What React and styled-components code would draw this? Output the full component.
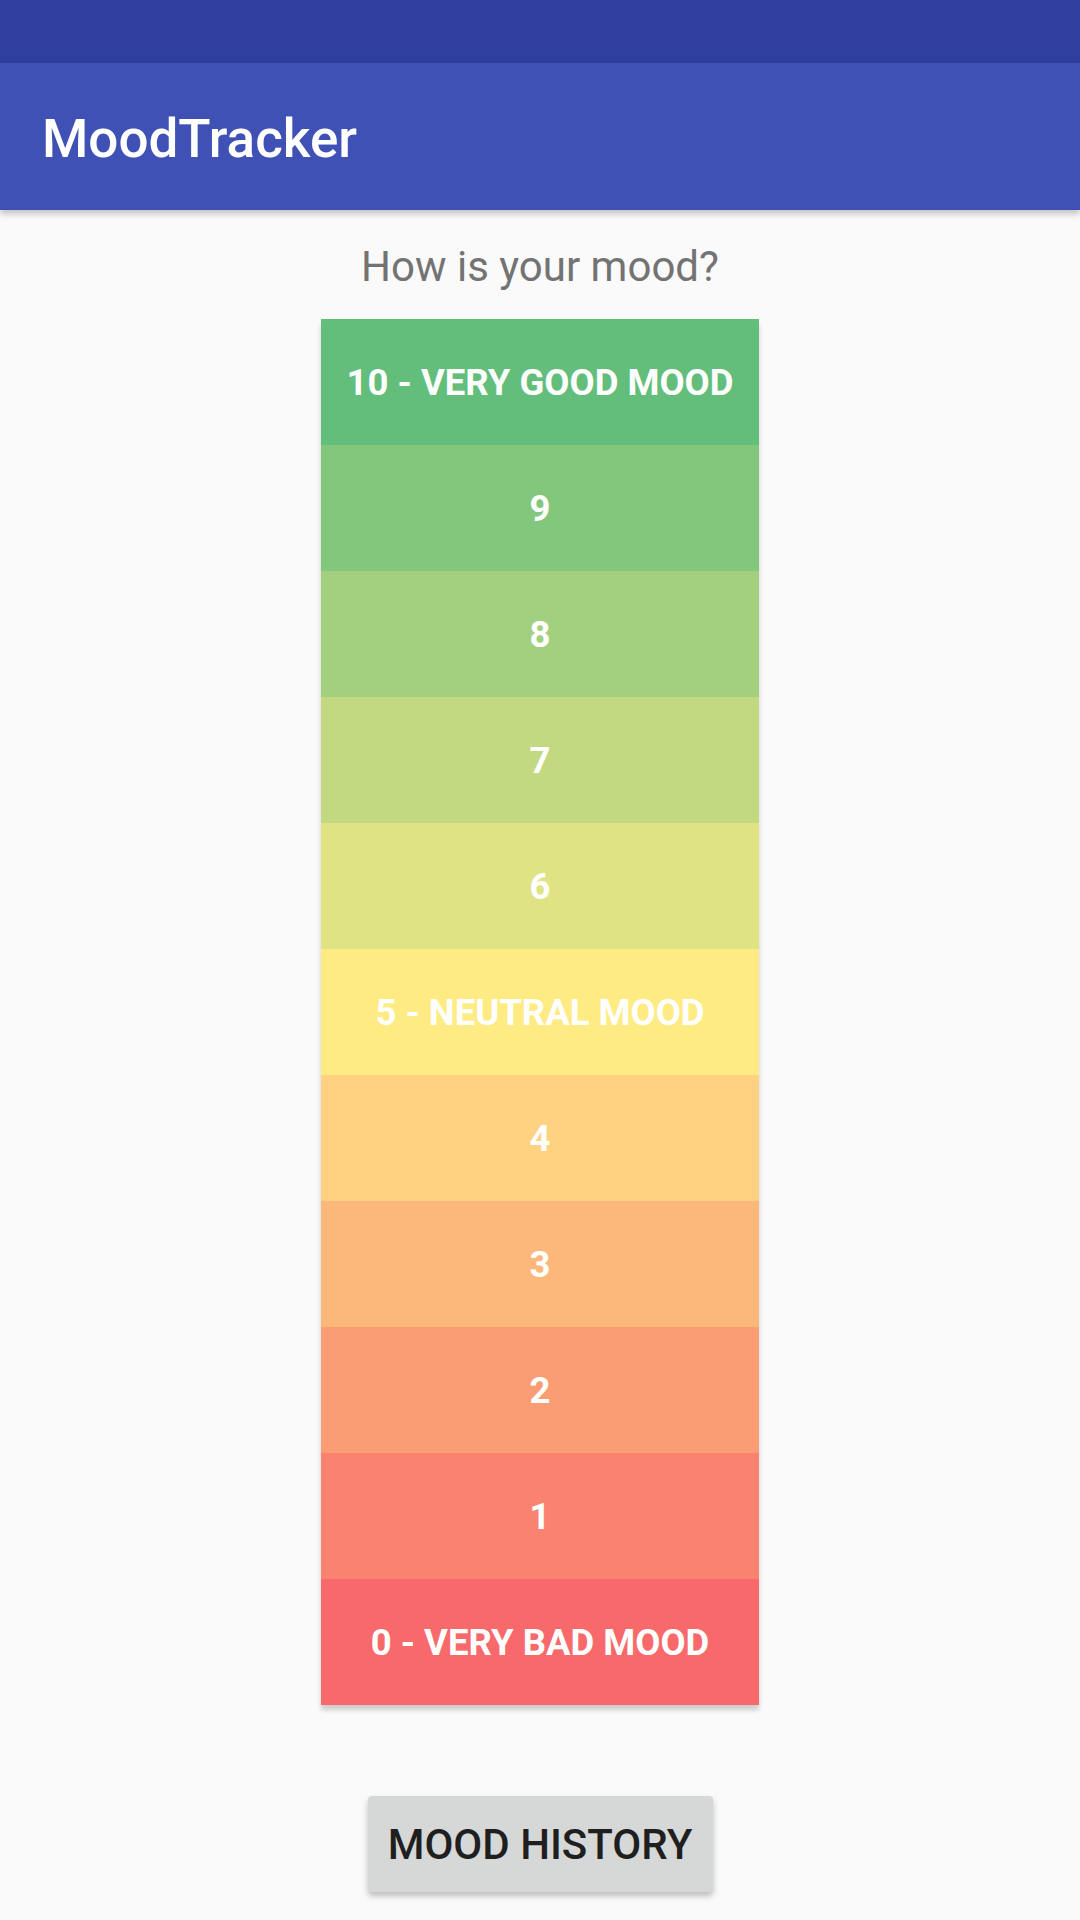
import React from "react";
import styled, { createGlobalStyle } from "styled-components";

const Global = createGlobalStyle`
  html, body { margin: 0; padding: 0; background: #fafafa; }
  body { font-family: Roboto, "Noto Sans", sans-serif; }
  #root { min-height: 1920px; }
`;

const Screen = styled.div`
  width: 1080px;
  min-height: 1920px;
  background: #fafafa;
  display: flex;
  flex-direction: column;
  overflow: hidden;
`;

const StatusBar = styled.div`
  height: 63px;
  background: #303f9f;
`;

const AppBar = styled.header`
  height: 147px;
  box-sizing: border-box;
  background: #3f51b5;
  display: flex;
  align-items: center;
  padding: 4px 0 0 42px;
  box-shadow: 0 4px 6px rgba(0, 0, 0, 0.22);
  position: relative;
  z-index: 1;
`;

const Title = styled.h1`
  margin: 0;
  color: #ffffff;
  font-family: Roboto, sans-serif;
  font-weight: 500;
  font-size: 53px;
`;

const Content = styled.main`
  display: flex;
  flex-direction: column;
  align-items: center;
  padding-top: 32px;
`;

const Prompt = styled.p`
  margin: 0 0 28px;
  color: #737373;
  font-family: Roboto, sans-serif;
  font-size: 42px;
  line-height: 49px;
  font-weight: 400;
`;

const Scale = styled.div`
  width: 438px;
  display: flex;
  flex-direction: column;
  box-shadow: 0 5px 5px rgba(0, 0, 0, 0.18);
`;

const MoodRow = styled.div`
  height: 126px;
  background: ${(p) => p.$bg};
  display: flex;
  align-items: center;
  justify-content: center;
  color: #ffffff;
  font-family: Roboto, sans-serif;
  font-weight: 700;
  font-size: 36.5px;
  text-transform: uppercase;
`;

const HistoryButton = styled.button`
  margin-top: 91px;
  width: 345px;
  height: 96px;
  border: none;
  border-radius: 4px;
  background: #d6d7d7;
  color: #1f1f1f;
  font-family: Roboto, sans-serif;
  font-weight: 500;
  font-size: 42px;
  text-transform: uppercase;
  box-shadow: 0 4px 6px rgba(0, 0, 0, 0.25);
  cursor: pointer;
  padding: 0;
`;

const moods = [
  { label: "10 - Very good mood", bg: "#63be7b" },
  { label: "9", bg: "#83c77d" },
  { label: "8", bg: "#a3d07f" },
  { label: "7", bg: "#c3d981" },
  { label: "6", bg: "#e0e383" },
  { label: "5 - Neutral mood", bg: "#ffeb84" },
  { label: "4", bg: "#fed280" },
  { label: "3", bg: "#fcb77a" },
  { label: "2", bg: "#fa9d75" },
  { label: "1", bg: "#f98370" },
  { label: "0 - Very bad mood", bg: "#f8696b" },
];

export default function App() {
  return (
    <Screen>
      <Global />
      <StatusBar />
      <AppBar>
        <Title>MoodTracker</Title>
      </AppBar>
      <Content>
        <Prompt>How is your mood?</Prompt>
        <Scale>
          {moods.map((m) => (
            <MoodRow key={m.label} $bg={m.bg}>
              {m.label}
            </MoodRow>
          ))}
        </Scale>
        <HistoryButton>Mood History</HistoryButton>
      </Content>
    </Screen>
  );
}
